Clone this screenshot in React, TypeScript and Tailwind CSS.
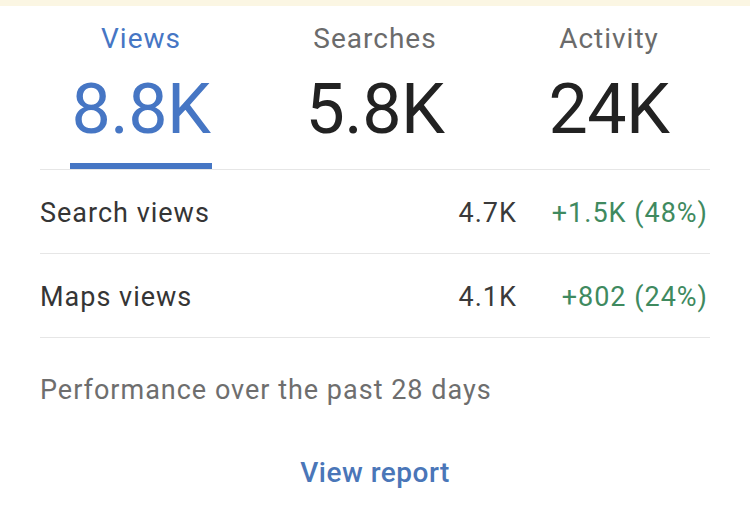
import React from "react";

const tabs = [
  { label: "Views", value: "8.8K", active: true },
  { label: "Searches", value: "5.8K", active: false },
  { label: "Activity", value: "24K", active: false },
];

const rows = [
  { label: "Search views", value: "4.7K", delta: "+1.5K (48%)" },
  { label: "Maps views", value: "4.1K", delta: "+802 (24%)" },
];

export default function App() {
  return (
    <div
      className="w-[750px] h-[511px] bg-white overflow-hidden"
      style={{ fontFamily: "Roboto, 'Noto Sans', sans-serif" }}
    >
      <div className="h-[6px] bg-[#fbf6e3]" />
      <div className="px-[24px]">
        <div className="grid grid-cols-3">
          {tabs.map((t) => (
            <div key={t.label} className="flex flex-col items-center">
              <div
                className={`mt-[13px] text-[28px] leading-[40px] tracking-[1px] ${
                  t.active ? "text-[#4676c4]" : "text-[#6b6b6b]"
                }`}
              >
                {t.label}
              </div>
              <div
                className={`mt-[10px] text-[70px] leading-[80px] tracking-[-0.5px] ${
                  t.active ? "text-[#4676c4]" : "text-[#222222]"
                }`}
              >
                {t.value}
              </div>
              <div
                className={`mt-[14px] h-[6px] w-[142px] ${
                  t.active ? "bg-[#4676c4]" : "bg-transparent"
                }`}
              />
            </div>
          ))}
        </div>
      </div>
      <div className="mx-[40px] border-t border-[#e6e6e6]">
        {rows.map((r) => (
          <div
            key={r.label}
            className="flex items-center h-[84px] pt-[4px] border-b border-[#e6e6e6] text-[27px] tracking-[1px]"
          >
            <div className="flex-1 text-[#353535]">{r.label}</div>
            <div className="text-[#3a3a3a]">{r.value}</div>
            <div className="w-[191px] text-right text-[#3f8a5f] mr-[2px]">{r.delta}</div>
          </div>
        ))}
        <div className="h-[100px] flex items-center text-[27px] tracking-[1px] text-[#6e6e6e] pt-[4px]">
          Performance over the past 28 days
        </div>
        <div className="flex justify-center mt-[15px]">
          <div className="text-[28px] font-medium text-[#4a76b8] leading-[40px] tracking-[0.5px]">
            View report
          </div>
        </div>
      </div>
    </div>
  );
}
